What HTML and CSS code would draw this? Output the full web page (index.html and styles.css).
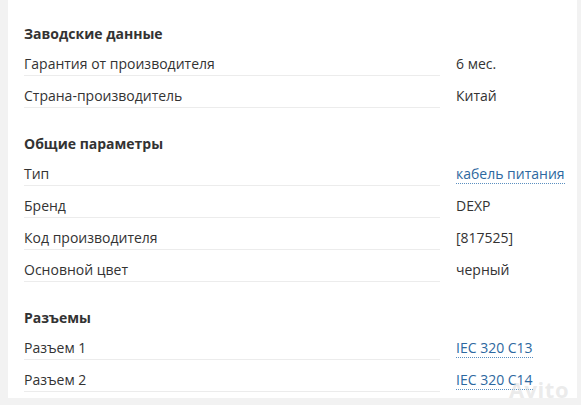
FILE: index.html
```html
<!DOCTYPE html>
<html lang="ru">
<head>
<meta charset="utf-8">
<link rel="stylesheet" href="styles.css">
</head>
<body>
<div class="panel">
  <section class="group">
    <h3 class="group-title">Заводские данные</h3>
    <div class="row"><div class="label">Гарантия от производителя</div><div class="value">6 мес.</div></div>
    <div class="row"><div class="label">Страна-производитель</div><div class="value">Китай</div></div>
  </section>
  <section class="group">
    <h3 class="group-title">Общие параметры</h3>
    <div class="row"><div class="label">Тип</div><div class="value"><span class="link">кабель питания</span></div></div>
    <div class="row"><div class="label">Бренд</div><div class="value">DEXP</div></div>
    <div class="row"><div class="label">Код производителя</div><div class="value">[817525]</div></div>
    <div class="row"><div class="label">Основной цвет</div><div class="value">черный</div></div>
  </section>
  <section class="group">
    <h3 class="group-title">Разъемы</h3>
    <div class="row"><div class="label">Разъем 1</div><div class="value"><span class="link">IEC 320 C13</span></div></div>
    <div class="row"><div class="label">Разъем 2</div><div class="value"><span class="link">IEC 320 C14</span></div></div>
  </section>
  <div class="watermark">Avito</div>
</div>
</body>
</html>
```
FILE: styles.css
```css
html, body {
  margin: 0;
  padding: 0;
}
body {
  background: #f2f2f2;
  font-family: "Open Sans", "Noto Sans", sans-serif;
  font-size: 14px;
  color: #333;
  width: 581px;
  height: 405px;
  overflow: hidden;
}
.panel {
  position: relative;
  margin-left: 8px;
  width: 569px;
  height: 398px;
  background: #fff;
  padding: 24px 0 0 16px;
  box-sizing: border-box;
}
.group + .group {
  margin-top: 26px;
}
.group-title {
  margin: 0;
  font-size: 14px;
  font-weight: 700;
  line-height: 20px;
  color: #333;
}
.row {
  display: grid;
  grid-template-columns: 416px 1fr;
  column-gap: 16px;
}
.label {
  padding: 10px 0 1px;
  line-height: 20px;
  border-bottom: 1px solid #ececec;
}
.value {
  padding: 10px 0 0;
  line-height: 20px;
}
.link {
  color: #2d68a0;
  border-bottom: 1px dotted #5b8fc0;
}
.watermark {
  position: absolute;
  right: 8px;
  bottom: -6px;
  font-size: 22px;
  font-weight: 700;
  color: rgba(215, 215, 215, 0.5);
  letter-spacing: 0.5px;
  pointer-events: none;
}
```
